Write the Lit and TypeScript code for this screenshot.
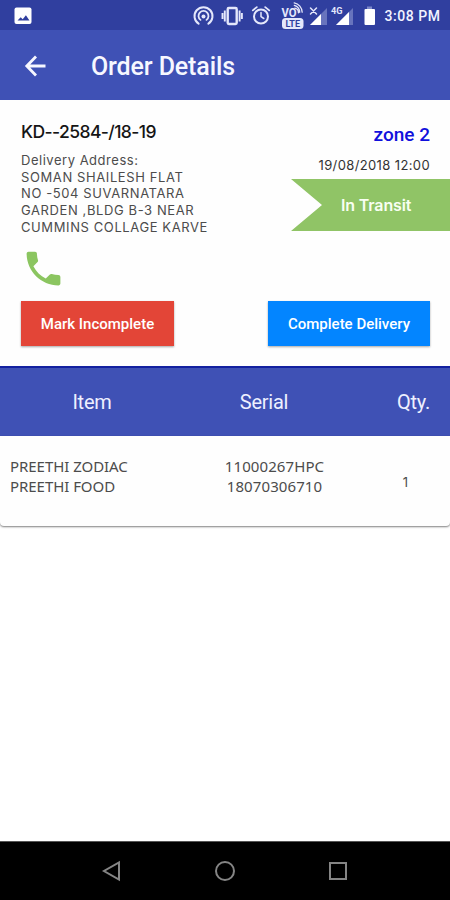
import { LitElement, html, css, svg } from "lit";
import { customElement } from "lit/decorators.js";

@customElement("status-bar")
class StatusBar extends LitElement {
  static styles = css`
    :host { display: block; height: 30px; background: #303f9f; }
    svg { display: block; }
    .clock { font: 500 14px Roboto, sans-serif; fill: #f3f4ff; }
    .tiny { font: 700 9px Roboto, sans-serif; fill: #e4e7fb; }
    .volte { font: 700 13px Roboto, sans-serif; fill: #e4e7fb; }
    .lte { font: 700 8.5px Roboto, sans-serif; fill: #303f9f; }
  `;
  render() {
    return html`<svg width="450" height="30" viewBox="0 0 450 30" fill="none" stroke-linecap="round">
      ${svg`
      <rect x="14.5" y="7.5" width="17" height="16.5" rx="2" fill="#fff"/>
      <path d="M17.5 20.5l3.2-3.2 2 2 3.2-4 3.6 5.2z" fill="#303f9f"/>
      <g stroke="#e4e7fb" stroke-width="2">
        <path d="M198.6 23.7a9 9 0 1 1 9.8 0"/>
        <path d="M200.5 19.9a5 5 0 1 1 6 0" stroke-width="1.8"/>
      </g>
      <circle cx="203.5" cy="16.4" r="2" fill="#e4e7fb"/>
      <rect x="227.7" y="8" width="9" height="16" rx="1.2" stroke="#e4e7fb" stroke-width="2.4"/>
      <path d="M224.8 10.5v11M239.6 10.5v11M222.5 13v6M241.9 13v6" stroke="#e4e7fb" stroke-width="1.9" stroke-linecap="butt"/>
      <circle cx="261" cy="16.5" r="7" stroke="#e4e7fb" stroke-width="2"/>
      <path d="M252.8 10.4l4-3.3M269.2 10.4l-4-3.3" stroke="#e4e7fb" stroke-width="1.8"/>
      <path d="M261 12.5v4.2l2.8 1.8" stroke="#e4e7fb" stroke-width="1.5"/>
      <text class="volte" x="281.5" y="17.3" textLength="15" lengthAdjust="spacingAndGlyphs">VO</text>
      <path d="M294.8 8.2a4.5 4.5 0 0 1 3.6 4.6M294.3 5.3a7.5 7.5 0 0 1 5.4 7M294.2 2.8a10 10 0 0 1 8 9.4" stroke="#e4e7fb" stroke-width="1.3"/>
      <rect x="282" y="18" width="21.5" height="11" rx="3.5" fill="#e4e7fb"/>
      <text class="lte" x="285.5" y="26.7" textLength="14.5" lengthAdjust="spacingAndGlyphs">LTE</text>
      <path d="M327 8v17h-17z" fill="#6874bd"/>
      <path d="M321 14v11h-11z" fill="#fff"/>
      <path d="M310.5 8l6 6M316.5 8l-6 6" stroke="#e4e7fb" stroke-width="1.5"/>
      <path d="M353 8v17h-17z" fill="#6874bd"/>
      <path d="M349 12v13h-13z" fill="#fff"/>
      <text class="tiny" x="331" y="14" textLength="11.5" lengthAdjust="spacingAndGlyphs">4G</text>
      <rect x="367" y="6.5" width="5" height="3" fill="#7d88c9"/>
      <rect x="364.5" y="9" width="10.5" height="16" rx="1" fill="#fff"/>
      <text class="clock" x="384.5" y="21" textLength="55.5">3:08 PM</text>`}
    </svg>`;
  }
}

@customElement("app-root")
class AppRoot extends LitElement {
  static styles = css`
    :host {
      display: flex; flex-direction: column; width: 450px; height: 900px;
      overflow: hidden; background: #fff; font-family: Roboto, sans-serif; color: #222;
    }
    * { box-sizing: border-box; }
    svg { display: block; }
    .bar { height: 70px; flex: none; background: #3f51b5; color: #f6f7ff; display: flex; align-items: center; padding: 2px 0 0 23px; }
    .title { margin-left: 43px; font-size: 25px; font-weight: 500; line-height: 30px; letter-spacing: -0.12px; padding-top: 2px; }
    .order { height: 266px; flex: none; padding: 20px 20px 20px 21px; display: flex; flex-direction: column; background: #fefefe; }
    .info { display: flex; justify-content: space-between; height: 126px; }
    .number { font: 500 17.5px/24px Inter, sans-serif; letter-spacing: -0.58px; color: #151515; white-space: pre; }
    .address { font: 400 13px/16.7px Inter, sans-serif; color: #4c4c4c; margin-top: 8px; white-space: pre; letter-spacing: 0.6px; }
    .label { letter-spacing: 0.52px; }
    .side { display: flex; flex-direction: column; align-items: flex-end; }
    .zone { font-size: 19px; line-height: 22px; font-weight: 500; color: #1010dc; margin-top: 4px; }
    .date { font: 400 13px/16px Inter, sans-serif; letter-spacing: 0.38px; color: #333; margin-top: 11px; }
    .ribbon {
      width: 159px; height: 52px; margin: 6px -20px 0 0; padding-left: 50px; background: #90c466; color: #f8fff2;
      clip-path: polygon(0 0, 100% 0, 100% 100%, 0 100%, 31px 50%);
      font: 600 16px/52px Inter, sans-serif; letter-spacing: -0.15px; flex: none;
    }
    .phone { height: 55px; }
    .actions { display: flex; justify-content: space-between; }
    .btn { height: 45px; border: 0; padding: 0; font: 500 15px/46px Roboto, sans-serif; color: #fff; text-align: center; box-shadow: 0 1px 2px rgba(0,0,0,.35); }
    .red { width: 153px; background: #e34537; }
    .blue { width: 162px; background: #0385ff; }
    .head { height: 70px; flex: none; background: #3f51b5; border-top: 2px solid #1421a0; color: #eef0ff; font-size: 20px; line-height: 69px; letter-spacing: -0.25px; }
    .cols { display: grid; grid-template-columns: 184px 160px 1fr; text-align: center; }
    .qty { text-align: right; padding-right: 20px; }
    .row { height: 90px; flex: none; border-radius: 0 0 4px 4px; background: #fefefe; box-shadow: 0 1px 2px rgba(0,0,0,.5); font: 400 15px/20px "Noto Sans", sans-serif; color: #4c4c4c; padding-top: 20px; }
    .items { text-align: left; padding-left: 10px; letter-spacing: -0.05px; }
    .serials { padding-left: 21px; letter-spacing: 0.1px; }
    .count { font: 400 13px/52px Inter, sans-serif; padding-left: 17px; }
    .fill { flex: 1; }
    .nav { height: 59px; flex: none; background: #000; border-top: 1px solid #555; display: flex; justify-content: space-around; align-items: center; padding: 0 56px; }
    .nav svg { fill: none; stroke: #858585; stroke-width: 2; }
  `;
  render() {
    return html`
      <status-bar></status-bar>
      <header class="bar">
        <svg width="25" height="24" viewBox="0 0 25 24" fill="none" stroke="#f6f7ff" stroke-width="2.8"><path d="M22.5 12H4M13 2.5L3.8 12l9.2 9.5"/></svg>
        <span class="title">Order Details</span>
      </header>
      <section class="order">
        <div class="info">
          <div>
            <div class="number">KD--2584-/18-19</div>
            <div class="address"><div class="label">Delivery Address:</div><div>SOMAN SHAILESH FLAT</div><div>NO -504 SUVARNATARA</div><div>GARDEN ,BLDG B-3 NEAR</div><div>CUMMINS COLLAGE KARVE</div></div>
          </div>
          <div class="side">
            <div class="zone">zone 2</div>
            <div class="date">19/08/2018 12:00</div>
            <div class="ribbon">In Transit</div>
          </div>
        </div>
        <div class="phone">
          <svg width="45" height="45" viewBox="0 0 24 24" fill="#8bc560"><path d="M6.62 10.79c1.44 2.83 3.76 5.14 6.59 6.59l2.2-2.2c.27-.27.67-.36 1.02-.24 1.12.37 2.33.57 3.57.57.55 0 1 .45 1 1V20c0 .55-.45 1-1 1-9.39 0-17-7.61-17-17 0-.55.45-1 1-1h3.5c.55 0 1 .45 1 1 0 1.25.2 2.45.57 3.57.11.35.03.74-.25 1.02l-2.2 2.2z"/></svg>
        </div>
        <div class="actions">
          <button class="btn red">Mark Incomplete</button>
          <button class="btn blue">Complete Delivery</button>
        </div>
      </section>
      <div class="head cols"><span>Item</span><span>Serial</span><span class="qty">Qty.</span></div>
      <div class="row cols">
        <div class="items">PREETHI ZODIAC<br>PREETHI FOOD</div>
        <div class="serials">11000267HPC<br>18070306710</div>
        <div class="count">1</div>
      </div>
      <div class="fill"></div>
      <nav class="nav">
        <svg width="22" height="22" viewBox="0 0 22 22"><path d="M18 2.5v17L3 11z"/></svg>
        <svg width="22" height="22" viewBox="0 0 22 22"><circle cx="11" cy="11" r="9"/></svg>
        <svg width="22" height="22" viewBox="0 0 22 22"><rect x="3" y="3" width="16" height="16"/></svg>
      </nav>`;
  }
}
